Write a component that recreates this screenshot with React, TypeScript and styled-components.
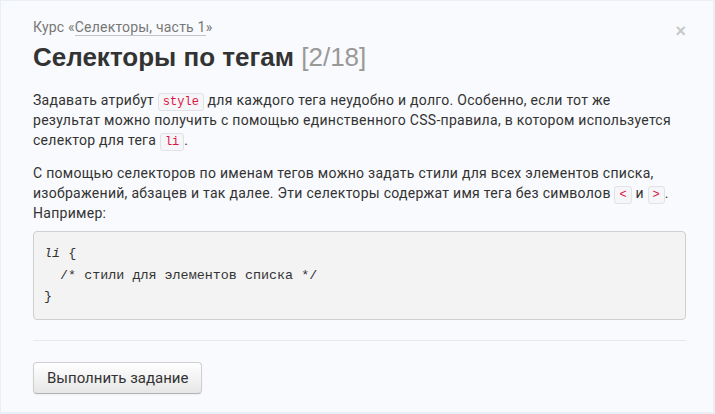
import React from "react";
import styled, { createGlobalStyle } from "styled-components";

const Global = createGlobalStyle`
  html, body { margin: 0; padding: 0; background: #ffffff; }
  body { font-family: Roboto, "Liberation Sans", Arial, sans-serif; }
`;

const Panel = styled.div`
  box-sizing: border-box;
  width: 715px;
  height: 414px;
  background: #f9fafd;
  border: 1px solid #e9eff5;
  border-right-width: 2px;
  border-bottom-width: 2px;
  padding: 17px 27px 0 32px;
  position: relative;
  color: #333;
`;

const Close = styled.span`
  position: absolute;
  top: 20px;
  right: 27px;
  font-family: "Liberation Sans", Arial, sans-serif;
  font-size: 18px;
  font-weight: bold;
  color: #c8c8c8;
  line-height: 20px;
`;

const Breadcrumb = styled.div`
  font-size: 14px;
  letter-spacing: 0.2px;
  line-height: 18px;
  color: #777;
`;

const CrumbLink = styled.span`
  border-bottom: 1px solid #c4c4c4;
`;

const Title = styled.h1`
  margin: 5px 0 17px;
  font-family: "Liberation Sans", Arial, sans-serif;
  font-size: 26px;
  line-height: 32px;
  font-weight: bold;
  color: #333;
`;

const Counter = styled.span`
  font-weight: normal;
  color: #999;
`;

const Para = styled.p`
  margin: 0 8px 13px 0;
  font-size: 14px;
  letter-spacing: 0.28px;
  line-height: 20px;
  &:last-of-type {
    margin-bottom: 8px;
  }
`;

const Code = styled.code`
  font-family: "Liberation Mono", "DejaVu Sans Mono", monospace;
  font-size: 12px;
  letter-spacing: 0;
  line-height: 14px;
  color: #dd1144;
  background: #f6f6f8;
  border: 1px solid #e1e1e8;
  border-radius: 3px;
  padding: 1px 4px;
`;

const Pre = styled.pre`
  margin: 0 0 20px;
  padding: 11px 10px;
  background: #f3f3f4;
  border: 1px solid #cfcfd1;
  border-radius: 4px;
  font-family: "Liberation Mono", "DejaVu Sans Mono", monospace;
  font-size: 13.4px;
  line-height: 21.5px;
  color: #333;
`;

const Tag = styled.i`
  font-style: italic;
`;

const Rule = styled.hr`
  margin: 0 0 21px;
  border: 0;
  border-top: 1px solid #e6e8ea;
`;

const Button = styled.button`
  font-family: Roboto, "Liberation Sans", Arial, sans-serif;
  font-size: 15px;
  line-height: 20px;
  color: #333;
  padding: 5px 13px;
  border: 1px solid #cfcfcf;
  border-bottom-color: #b3b3b3;
  border-radius: 4px;
  background: linear-gradient(#ffffff, #e6e6e6);
  box-shadow: inset 0 1px 0 rgba(255, 255, 255, 0.2), 0 1px 2px rgba(0, 0, 0, 0.05);
`;

export default function App() {
  return (
    <>
      <Global />
      <Panel>
        <Close>×</Close>
        <Breadcrumb>
          Курс «<CrumbLink>Селекторы, часть 1</CrumbLink>»
        </Breadcrumb>
        <Title>
          Селекторы по тегам <Counter>[2/18]</Counter>
        </Title>
        <Para>
          Задавать атрибут <Code>style</Code> для каждого тега неудобно и долго. Особенно, если тот же
          результат можно получить с помощью единственного CSS-правила, в котором используется
          селектор для тега <Code>li</Code>.
        </Para>
        <Para>
          С помощью селекторов по именам тегов можно задать стили для всех элементов списка,
          изображений, абзацев и так далее. Эти селекторы содержат имя тега без символов <Code>&lt;</Code> и <Code>&gt;</Code>.
          Например:
        </Para>
        <Pre>
          <Tag>li</Tag> {"{"}{"\n"}  /* стили для элементов списка */{"\n"}{"}"}
        </Pre>
        <Rule />
        <Button>Выполнить задание</Button>
      </Panel>
    </>
  );
}
